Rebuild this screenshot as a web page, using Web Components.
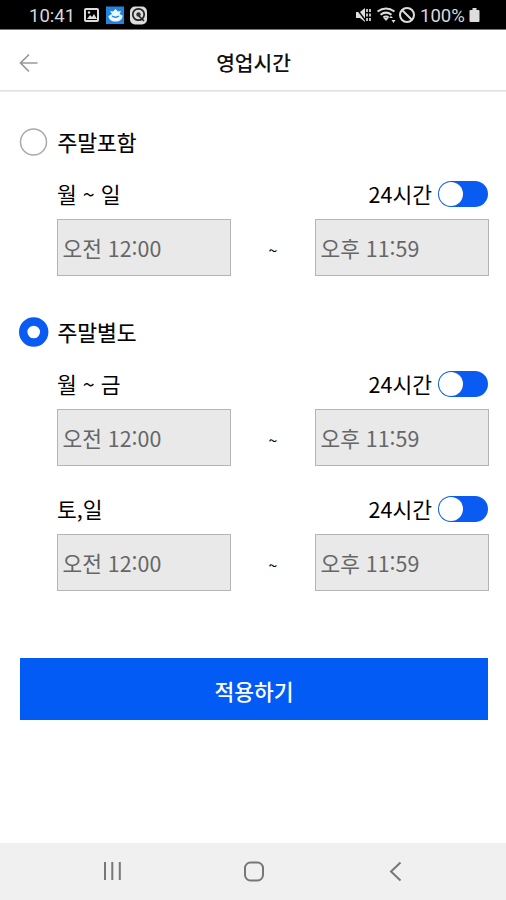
<!DOCTYPE html>
<html lang="ko">
<head>
<meta charset="utf-8">
<title>영업시간</title>
<style>
html, body { margin: 0; height: 100%; background: #fff; }
body { font-family: "Noto Sans CJK KR", "Noto Sans", sans-serif; overflow: hidden; }
</style>
</head>
<body>
<hours-screen></hours-screen>
<script>
const define = (name, html) => customElements.define(name, class extends HTMLElement {
  constructor() {
    super();
    const t = document.createElement('template');
    t.innerHTML = html;
    this.attachShadow({ mode: 'open' }).append(t.content.cloneNode(true));
  }
});

define('status-bar', `
<style>
:host { display: flex; justify-content: space-between; align-items: center; box-sizing: border-box; height: 30px; padding: 0 26px 0 29px; background: #000; border-bottom: 1px solid #777; color: #d8d8d8; font: 400 19px/29px Roboto, sans-serif; }
div { display: flex; align-items: center; height: 29px; }
span { display: block; white-space: nowrap; }
svg { display: block; }
.time { width: 45px; font-size: 18.5px; margin-right: 10px; padding-top: 3px; }
.pct { font-size: 18.5px; width: 46px; margin: 3px 3px 0 4px; }
</style>
<div>
  <span class="time">10:41</span>
  <svg width="64" height="20" viewBox="0 0 64 20">
    <rect x="1" y="4" width="13" height="12" rx="1" fill="none" stroke="#ddd" stroke-width="2"/>
    <path d="M3 14l3-4 2 2 2-3 3 5z" fill="#ddd"/><circle cx="5" cy="7.500" r="1.200" fill="#ddd"/>
    <rect x="22" y="1.500" width="18" height="17.500" fill="#2583dc"/>
    <path d="M26 6l3 .5L31.500 4 34 6.500l3-.5-1.500 3 3 1.500c0 4-3 6-7 6s-7-2-7-5.500l3.500-2z" fill="#e9f7ff"/>
    <path d="M28 11q3.500 2.500 7 0" fill="none" stroke="#2583dc" stroke-width="1.300"/>
    <rect x="46" y="1.500" width="17" height="18" rx="5" fill="#ddd"/>
    <circle cx="54.500" cy="9.500" r="5.700" fill="none" stroke="#222" stroke-width="1.700"/>
    <circle cx="54.500" cy="9.500" r="2.200" fill="#333"/><path d="M55 11l5 5" stroke="#222" stroke-width="1.500"/>
  </svg>
</div>
<div>
  <svg width="61" height="20" viewBox="0 0 61 20">
    <path d="M1 7h4l5-4v14l-5-4H1z" fill="#ddd"/><path d="M1 3l10 13" stroke="#000" stroke-width="1.300"/>
    <path d="M12 4v12M15 4v12" stroke="#ddd" stroke-width="1.700" stroke-dasharray="3 1.500"/>
    <g fill="none" stroke="#ddd" stroke-width="2"><path d="M22.500 6.500Q31 .5 39.500 6.500M25.500 9.800Q31 5.500 36.500 9.800"/><path d="M28.300 12.500q2.700-2 5.400 0"/></g>
    <path d="M31 16l-2.500-3h5z M34 13l2-2 2 2zM36.500 15h4l-2 3z" fill="#ddd"/>
    <circle cx="52" cy="10" r="7" fill="none" stroke="#ddd" stroke-width="2"/><path d="M47 5l10 10" stroke="#ddd" stroke-width="2"/>
  </svg>
  <span class="pct">100%</span>
  <svg width="11" height="16" viewBox="0 0 11 16"><path d="M3.500 1h4v2h2q1 0 1 1v10q0 1-1 1h-8q-1 0-1-1V4q0-1 1-1h2z" fill="#ddd"/></svg>
</div>`);

define('title-bar', `
<style>
:host { display: grid; grid-template-columns: 58px 1fr 58px; align-items: center; height: 60px; padding-top: 1px; box-sizing: border-box; box-shadow: 0 1px 0 #e0e0e0, 0 2px 0 #eee; }
svg { display: block; margin: 5px 0 0 19px; }
h1 { margin: 3px 0 0 1px; text-align: center; font-size: 20.3px; line-height: 30px; font-weight: 500; color: #111; }
</style>
<svg width="20" height="20" viewBox="0 0 20 20" fill="none" stroke="#999" stroke-width="1.700"><path d="M18.500 10H2M10 1.500L1.500 10l8.500 8.500"/></svg>
<h1><slot></slot></h1>`);

define('radio-option', `
<style>
:host { display: flex; align-items: center; height: 30px; gap: 8.500px; font-size: 21.5px; line-height: 30px; font-weight: 400; color: #000; -webkit-text-stroke: .2px #000; }
svg { display: block; flex: none; }
.on, :host([checked]) .off { display: none; }
:host([checked]) .on { display: inline; }
</style>
<svg width="30" height="30" viewBox="0 0 30 30">
  <circle class="off" cx="14.500" cy="15" r="13" fill="#fff" stroke="#aaa" stroke-width="1.500"/>
  <circle class="on" cx="14.700" cy="15" r="10.500" fill="#fff" stroke="#0a5bf2" stroke-width="8.400"/>
</svg><span><slot></slot></span>`);

define('toggle-switch', `
<style>
:host { display: flex; box-sizing: border-box; width: 50px; height: 26px; padding: 1px; border-radius: 13px; background: #0a5bf2; }
i { width: 24px; height: 24px; border-radius: 50%; background: #fff; }
</style><i></i>`);

define('time-field', `
<style>
:host { display: flex; align-items: center; box-sizing: border-box; width: 174px; height: 57px; padding: 1px 0 0 4.500px; border: 1.500px solid #b4b4b4; background: #e9e9e9; color: #666; font-size: 21.4px; line-height: 30px; white-space: nowrap; }
</style><span><slot></slot></span>`);

define('time-range', `
<style>
:host { display: block; margin-left: 38px; color: #000; font-size: 21.5px; line-height: 30px; }
.head, .fields, .all { display: flex; align-items: center; }
.head { justify-content: space-between; height: 30px; margin-bottom: 10px; padding-right: 1px; }
.all { gap: 6px; }
.fields { justify-content: space-between; }
.sep { font-size: 16px; padding: 5px 0 0; }
</style>
<div class="head"><span><slot></slot></span><div class="all"><span>24시간</span><toggle-switch></toggle-switch></div></div>
<div class="fields"><time-field>오전 12:00</time-field><span class="sep">~</span><time-field>오후 11:59</time-field></div>`);

define('apply-button', `
<style>
:host { display: block; }
button { display: block; width: 100%; height: 62px; padding: 4px 0 0; border: 0; background: #025bf4; color: #fff; font: 500 21.5px/30px "Noto Sans CJK KR", sans-serif; }
</style><button><slot></slot></button>`);

define('nav-bar', `
<style>
:host { display: block; height: 57px; background: #f0f0f0; }
svg { display: block; }
</style>
<svg width="506" height="57" viewBox="0 0 506 57" fill="none" stroke="#777" stroke-width="2">
<path d="M105 19v18M112.300 19v18M119.800 19v18"/><rect x="245" y="19.500" width="18" height="18" rx="5.500"/><path d="M400.500 19.500L391 28.500l9.500 9"/></svg>`);

define('hours-screen', `
<style>
:host { display: flex; flex-direction: column; width: 506px; height: 900px; background: #fff; }
main { flex: 1; padding: 37px 17px 0 19px; }
.group { display: grid; row-gap: 28px; padding-top: 22px; margin-bottom: 41px; }
.group.last { margin-bottom: 67px; }
apply-button { margin: 0 1px; }
</style>
<status-bar></status-bar>
<title-bar>영업시간</title-bar>
<main>
  <radio-option>주말포함</radio-option>
  <div class="group"><time-range>월 ~ 일</time-range></div>
  <radio-option checked>주말별도</radio-option>
  <div class="group last"><time-range>월 ~ 금</time-range><time-range>토,일</time-range></div>
  <apply-button>적용하기</apply-button>
</main>
<nav-bar></nav-bar>
`);
</script>
</body>
</html>
